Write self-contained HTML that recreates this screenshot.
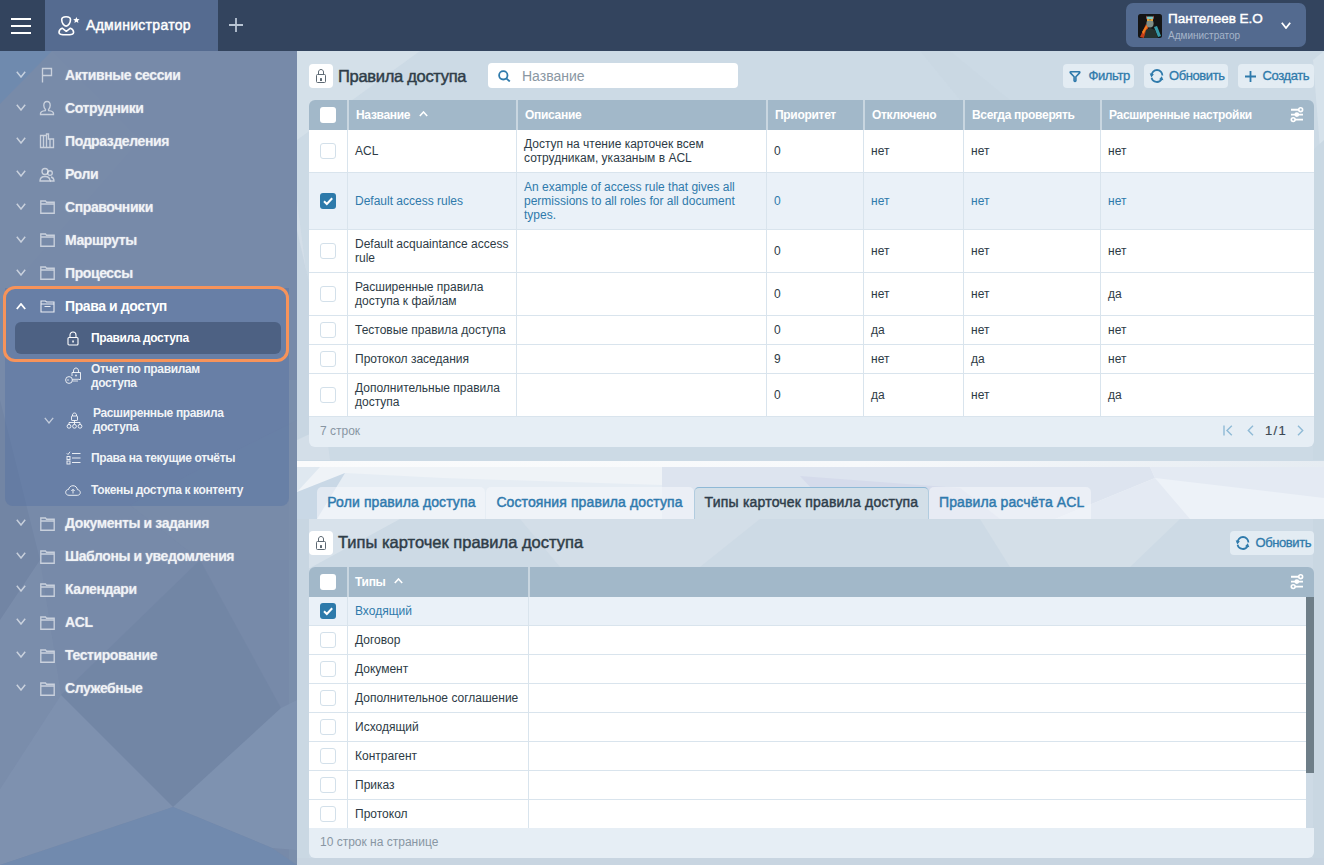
<!DOCTYPE html>
<html><head><meta charset="utf-8">
<style>
*{box-sizing:border-box;margin:0;padding:0}
html,body{width:1324px;height:865px;overflow:hidden;font-family:"Liberation Sans",sans-serif;}
body{position:relative;background:#d2dee8}
.abs{position:absolute}
#hdr{left:0;top:0;width:1324px;height:51px;background:#33445e}
#ham i{position:absolute;left:11px;width:20px;height:2px;background:#fff}
#admtab{left:45px;top:0;width:173px;height:51px;background:#556b90}
#side{left:0;top:51px;width:297px;height:814px;background:#778aa9;overflow:hidden}
#sidec{left:0;top:0;width:297px;height:865px}
#main{left:297px;top:51px;width:1027px;height:814px;background:#d2dee8;overflow:hidden}
.si{position:absolute;left:65px;color:rgba(255,255,255,0.92);font-size:14px;line-height:16px;font-weight:bold;white-space:nowrap;letter-spacing:-0.4px}
.ss{position:absolute;left:91px;color:rgba(255,255,255,0.92);font-size:12px;font-weight:bold;line-height:14px;white-space:nowrap;letter-spacing:-0.37px}
.grp{left:5px;top:288px;width:284px;height:218px;background:rgba(78,108,160,0.36);border-radius:0 0 8px 8px}
.sel{left:15px;top:322px;width:266px;height:32px;background:#4d6183;border-radius:6px}
.orange{left:3px;top:286px;width:286px;height:76px;border:3px solid #f7935a;border-radius:12px}
.cb{width:16px;height:16px;border:1px solid #d3e0ea;border-radius:3px;background:#fff}
.cbh{border:none}
.cbc{background:#2d7aaa;border:none}
.cbc svg{display:block}
.lockbtn{width:24px;height:24px;background:#fff;border-radius:4px}
.title{font-size:16.5px;line-height:20px;color:#2f3d48;white-space:nowrap;letter-spacing:-0.3px;-webkit-text-stroke:0.45px #2f3d48}
.search{left:488px;top:63px;width:250px;height:25px;background:#fff;border-radius:4px}
.tbtn{height:24px;background:#e3ecf3;border-radius:4px}
.btxt{font-size:13px;line-height:14px;color:#2f7aab;white-space:nowrap;letter-spacing:-0.4px;-webkit-text-stroke:0.3px #2f7aab}
.thead{background:#a2b8c9;border-radius:6px 6px 0 0}
.th{font-size:12px;line-height:14px;color:#fff;font-weight:bold;white-space:nowrap;letter-spacing:-0.3px}
.trow{background:#fff;border-bottom:1px solid #d9e4ed}
.tsel{background:#eaf1f8}
.vdiv{width:1px;background:#d9e4ed}
.td{display:flex;align-items:center;font-size:12px;line-height:14px;color:#2d3b46;white-space:nowrap}
.tdsel{color:#2f7aab}
.tfoot{background:#e6eef5;border-radius:0 0 6px 6px}
.tabsbg{background:#e3ebf3}
.tab{background:rgba(246,248,251,0.55);border-radius:5px 5px 0 0}
.tabact{background:#d3dfe8;border:1px solid #8fb9d6;border-bottom:none;border-color:#8fb9d6 rgba(143,185,214,0.5) transparent rgba(143,185,214,0.5)}
.tabt{font-size:14px;line-height:16px;color:#2f7aae;white-space:nowrap;letter-spacing:0.1px;-webkit-text-stroke:0.45px #2f7aae}
.tabtact{color:#2e3d4a;-webkit-text-stroke:0.45px #2e3d4a;letter-spacing:0.2px}
.avatar{background:radial-gradient(circle at 55% 35%, #6e8a8a 0 18%, transparent 30%), linear-gradient(135deg,#2a2a2a 0%,#c0431a 40%,#1e2a30 60%,#2fa3a8 100%)}

.blr{position:absolute;left:0;top:0;width:297px;height:865px;}
.bgsvg{position:absolute;left:0;top:0}
.blr .si{color:rgba(255,255,255,0.8);text-shadow:0 0 1.2px rgba(255,255,255,0.6)}

</style></head><body>
<svg width="0" height="0" style="position:absolute"><defs><filter id="sb" x="-5%" y="-5%" width="110%" height="110%"><feGaussianBlur stdDeviation="0.7"/></filter></defs></svg>
<div id="hdr" class="abs"></div>
<div id="ham" class="abs"><i style="top:18px"></i><i style="top:25px"></i><i style="top:32px"></i></div>
<div id="admtab" class="abs"></div>
<div id="side" class="abs"><svg class="bgsvg" width="297" height="814" viewBox="0 51 297 814">
<polygon points="0,51 52,51 0,104" fill="#6b8ab2" opacity="0.6"/>
<polygon points="52,51 0,104 0,300 140,140" fill="#7a8cab" opacity="0.4"/>
<polygon points="289,380 297,380 297,865 289,865" fill="#8194b0" opacity="0.35"/>
<polygon points="0,400 40,560 0,620" fill="#6d80a0" opacity="0.5"/>
<polygon points="0,620 40,560 61,695 0,789" fill="#7d90ae" opacity="0.6"/>
<polygon points="61,695 173,807 281,708 200,560" fill="#7084a4" opacity="0.7"/>
<polygon points="61,695 173,807 0,865 0,789" fill="#7f92b0" opacity="0.8"/>
<polygon points="281,708 173,807 272,848 297,850 297,700" fill="#8093b1" opacity="0.8"/>
<polygon points="0,865 173,807 272,848 297,865" fill="#708aae" opacity="0.9"/>
<polygon points="130,505 297,420 297,560 200,560" fill="#798baa" opacity="0.5"/>
</svg></div>
<div id="main" class="abs"><svg class="bgsvg" width="1027" height="814" viewBox="297 51 1027 814">
<rect x="297" y="51" width="1027" height="410" fill="#ccdae5"/>
<polygon points="297,51 420,51 297,140" fill="#d6e1ea" opacity="0.8"/>
<polygon points="297,200 330,460 297,460" fill="#d4dfe9" opacity="0.8"/>
<polygon points="297,230 340,420 297,440" fill="#c7d5e1" opacity="0.9"/>
<polygon points="1313,60 1324,51 1324,200" fill="#d8e3ec" opacity="0.8"/>
<polygon points="1313,150 1324,140 1324,460 1313,460" fill="#c9d7e2" opacity="0.9"/>
<polygon points="920,51 950,51 1010,100 960,100" fill="#c9d7e3" opacity="0.7"/>
<rect x="297" y="519" width="1027" height="346" fill="#cddae5"/>
<polygon points="297,519 400,519 297,575" fill="#d8e2eb"/>
<polygon points="520,519 760,519 700,567 560,567" fill="#d3dee8"/>
<polygon points="980,519 1180,519 1130,567 1010,567" fill="#d4dfe8"/>
<polygon points="297,519 297,700 309,700 309,519" fill="#c8d6e2"/>
<polygon points="297,700 309,700 309,865 297,865" fill="#cad8e3"/>
<polygon points="1313,519 1324,519 1324,865 1313,865" fill="#c9d7e2"/>
<polygon points="297,858 1324,858 1324,865 297,865" fill="#c8d5e1"/>
</svg></div>
<div id="sidec" class="abs"><div class="blr"><div class="si" style="top:67.15px">Активные сессии</div><svg class="abs" style="left:16px;top:71px" width="10" height="7" viewBox="0 0 10 7"><path d="M0.8 0.8 L5.0 6 L9.2 0.8" fill="none" stroke="rgba(255,255,255,0.6)" stroke-width="1.5"/></svg><svg class="abs" style="left:41px;top:67px;" width="12" height="16" viewBox="0 0 12 16"><path d="M1.5 15.5 V1.5 H10.5 V8.5 H1.5" fill="none" stroke="rgba(255,255,255,0.6)" stroke-width="1.35"/></svg></div><div class="blr"><div class="si" style="top:100.15px">Сотрудники</div><svg class="abs" style="left:16px;top:104px" width="10" height="7" viewBox="0 0 10 7"><path d="M0.8 0.8 L5.0 6 L9.2 0.8" fill="none" stroke="rgba(255,255,255,0.6)" stroke-width="1.5"/></svg><svg class="abs" style="left:39px;top:100px;" width="16" height="16" viewBox="0 0 16 16"><path d="M8 1.5 C5.5 1.5 4.8 3.5 4.8 5.5 C4.8 7.5 6 9 6.5 9.6 L6.3 10.6 C3.5 11 1.5 12 1.5 13.5 V14.5 H14.5 V13.5 C14.5 12 12.5 11 9.7 10.6 L9.5 9.6 C10 9 11.2 7.5 11.2 5.5 C11.2 3.5 10.5 1.5 8 1.5 Z" fill="none" stroke="rgba(255,255,255,0.6)" stroke-width="1.35"/></svg></div><div class="blr"><div class="si" style="top:133.15px">Подразделения</div><svg class="abs" style="left:16px;top:137px" width="10" height="7" viewBox="0 0 10 7"><path d="M0.8 0.8 L5.0 6 L9.2 0.8" fill="none" stroke="rgba(255,255,255,0.6)" stroke-width="1.5"/></svg><svg class="abs" style="left:39px;top:133px;" width="16" height="16" viewBox="0 0 16 16"><path d="M1.5 14.5 V2.5 H7.5 V1 H9.5 V6 H14.5 V14.5 Z M4.5 3 V14.5 M7.5 2.5 V14.5 M11 6 V14.5" fill="none" stroke="rgba(255,255,255,0.6)" stroke-width="1.35"/></svg></div><div class="blr"><div class="si" style="top:166.15px">Роли</div><svg class="abs" style="left:16px;top:170px" width="10" height="7" viewBox="0 0 10 7"><path d="M0.8 0.8 L5.0 6 L9.2 0.8" fill="none" stroke="rgba(255,255,255,0.6)" stroke-width="1.5"/></svg><svg class="abs" style="left:39px;top:167px;" width="16" height="15" viewBox="0 0 16 15"><circle cx="6" cy="4.5" r="3" fill="none" stroke="rgba(255,255,255,0.6)" stroke-width="1.35"/><path d="M1 14 C1 11 3 9.5 6 9.5 C9 9.5 11 11 11 14 Z" fill="none" stroke="rgba(255,255,255,0.6)" stroke-width="1.35"/><circle cx="11" cy="6" r="2.3" fill="none" stroke="rgba(255,255,255,0.6)" stroke-width="1.35"/><path d="M12 10 C14 10.5 15 12 15 14 H11" fill="none" stroke="rgba(255,255,255,0.6)" stroke-width="1.35"/></svg></div><div class="blr"><div class="si" style="top:199.15px">Справочники</div><svg class="abs" style="left:16px;top:203px" width="10" height="7" viewBox="0 0 10 7"><path d="M0.8 0.8 L5.0 6 L9.2 0.8" fill="none" stroke="rgba(255,255,255,0.6)" stroke-width="1.5"/></svg><svg class="abs" style="left:40px;top:200px;" width="15" height="14" viewBox="0 0 15 14"><path d="M0.8 13.2 V1 H5.5 L6.5 2.2 H14.2 V13.2 Z M0.8 4 H14.2" fill="none" stroke="rgba(255,255,255,0.6)" stroke-width="1.35"/></svg></div><div class="blr"><div class="si" style="top:232.15px">Маршруты</div><svg class="abs" style="left:16px;top:236px" width="10" height="7" viewBox="0 0 10 7"><path d="M0.8 0.8 L5.0 6 L9.2 0.8" fill="none" stroke="rgba(255,255,255,0.6)" stroke-width="1.5"/></svg><svg class="abs" style="left:40px;top:233px;" width="15" height="14" viewBox="0 0 15 14"><path d="M0.8 13.2 V1 H5.5 L6.5 2.2 H14.2 V13.2 Z M0.8 4 H14.2" fill="none" stroke="rgba(255,255,255,0.6)" stroke-width="1.35"/></svg></div><div class="blr"><div class="si" style="top:265.15px">Процессы</div><svg class="abs" style="left:16px;top:269px" width="10" height="7" viewBox="0 0 10 7"><path d="M0.8 0.8 L5.0 6 L9.2 0.8" fill="none" stroke="rgba(255,255,255,0.6)" stroke-width="1.5"/></svg><svg class="abs" style="left:40px;top:266px;" width="15" height="14" viewBox="0 0 15 14"><path d="M0.8 13.2 V1 H5.5 L6.5 2.2 H14.2 V13.2 Z M0.8 4 H14.2" fill="none" stroke="rgba(255,255,255,0.6)" stroke-width="1.35"/></svg></div><div class="abs grp"></div><div class="abs sel"></div><div class="abs orange"></div><div class="si" style="top:298.15px;color:#fff">Права и доступ</div><svg class="abs" style="left:16px;top:303px" width="10" height="7" viewBox="0 0 10 7"><path d="M0.8 6 L5.0 1 L9.2 6" fill="none" stroke="#fff" stroke-width="1.8"/></svg><svg class="abs" style="left:40px;top:300px;" width="15" height="13" viewBox="0 0 15 13"><path d="M1 12 V1 H5.5 L6.5 2 H14 V12 Z M1 4 H14 M4.5 6.5 H10.5" fill="none" stroke="rgba(255,255,255,0.85)" stroke-width="1.1"/></svg><div class="ss" style="top:330.84px;color:#fff">Правила доступа</div><svg class="abs" style="left:67px;top:331px;" width="12" height="15" viewBox="0 0 12 15"><path d="M3 6.5 V4 C3 2.2 4.3 1 6 1 C7.7 1 9 2.2 9 4 V6.5" fill="none" stroke="#fff" stroke-width="1.1"/><rect x="1" y="6.5" width="10" height="7.5" rx="1" fill="none" stroke="#fff" stroke-width="1.1"/><rect x="5.3" y="9.5" width="1.5" height="2" fill="#fff"/></svg><div class="ss" style="top:361.84px">Отчет по правилам<br>доступа</div><svg class="abs" style="left:65px;top:367px;" width="17" height="17" viewBox="0 0 17 17"><path d="M8.5 5.5 V4 C8.5 2.3 9.5 1 11 1 C12.5 1 13.5 2.3 13.5 4 V5.5" fill="none" stroke="rgba(255,255,255,0.85)" stroke-width="1"/><path d="M7 9 V5.5 H15.5 V12.5 H14" fill="none" stroke="rgba(255,255,255,0.85)" stroke-width="1"/><circle cx="11" cy="8.5" r="0.9" fill="rgba(255,255,255,0.85)"/><circle cx="4" cy="13" r="3.4" fill="none" stroke="rgba(255,255,255,0.85)" stroke-width="1"/><path d="M7.4 12.3 H14 M7.4 14 H13" fill="none" stroke="rgba(255,255,255,0.85)" stroke-width="0.9"/><circle cx="3" cy="13" r="0.8" fill="rgba(255,255,255,0.85)"/></svg><div class="ss" style="left:93px;top:405.84px">Расширенные правила<br>доступа</div><svg class="abs" style="left:44px;top:417px" width="10" height="7" viewBox="0 0 10 7"><path d="M0.8 0.8 L5.0 6 L9.2 0.8" fill="none" stroke="rgba(255,255,255,0.6)" stroke-width="1.3"/></svg><svg class="abs" style="left:66px;top:412px;" width="17" height="17" viewBox="0 0 17 17"><path d="M6.5 4 V3 C6.5 1.8 7.4 1 8.5 1 C9.6 1 10.5 1.8 10.5 3 V4" fill="none" stroke="rgba(255,255,255,0.85)" stroke-width="1"/><rect x="5.5" y="4" width="6" height="4.5" rx="0.6" fill="none" stroke="rgba(255,255,255,0.85)" stroke-width="1"/><path d="M8.5 8.5 V10.5 M3 12.5 V10.5 H14 V12.5 M8.5 10.5 V12.5" fill="none" stroke="rgba(255,255,255,0.85)" stroke-width="1"/><circle cx="3" cy="14.3" r="1.9" fill="none" stroke="rgba(255,255,255,0.85)" stroke-width="1"/><circle cx="8.5" cy="14.3" r="1.9" fill="none" stroke="rgba(255,255,255,0.85)" stroke-width="1"/><circle cx="14" cy="14.3" r="1.9" fill="none" stroke="rgba(255,255,255,0.85)" stroke-width="1"/></svg><div class="ss" style="top:450.84px">Права на текущие отчёты</div><svg class="abs" style="left:66px;top:451px;" width="15" height="14" viewBox="0 0 15 14"><path d="M0.8 2.3 L2 3.5 L4 0.8 M6 2.5 H14.5 M6 7 H14.5 M6 11.5 H14.5" fill="none" stroke="rgba(255,255,255,0.85)" stroke-width="1"/><rect x="1" y="5.5" width="3" height="3" fill="none" stroke="rgba(255,255,255,0.85)" stroke-width="1"/><rect x="1" y="10" width="3" height="3" fill="none" stroke="rgba(255,255,255,0.85)" stroke-width="1"/></svg><div class="ss" style="top:483.34px">Токены доступа к контенту</div><svg class="abs" style="left:65px;top:484.5px;" width="16" height="11" viewBox="0 0 16 11"><path d="M4 10.3 C2 10.3 0.7 9 0.7 7.3 C0.7 5.6 2 4.5 3.5 4.5 C4 2.2 5.8 0.7 8 0.7 C10.5 0.7 12.2 2.5 12.4 4.6 C14 4.8 15.3 6 15.3 7.6 C15.3 9.2 14 10.3 12.3 10.3 Z" fill="none" stroke="rgba(255,255,255,0.85)" stroke-width="1"/><path d="M8 8.5 V4.5 M6.3 6 L8 4.3 L9.7 6" fill="none" stroke="rgba(255,255,255,0.85)" stroke-width="1"/></svg><div class="blr"><div class="si" style="top:515.15px">Документы и задания</div><svg class="abs" style="left:16px;top:519px" width="10" height="7" viewBox="0 0 10 7"><path d="M0.8 0.8 L5.0 6 L9.2 0.8" fill="none" stroke="rgba(255,255,255,0.6)" stroke-width="1.5"/></svg><svg class="abs" style="left:40px;top:516.5px;" width="15" height="14" viewBox="0 0 15 14"><path d="M0.8 13.2 V1 H5.5 L6.5 2.2 H14.2 V13.2 Z M0.8 4 H14.2" fill="none" stroke="rgba(255,255,255,0.6)" stroke-width="1.35"/></svg></div><div class="blr"><div class="si" style="top:548.15px">Шаблоны и уведомления</div><svg class="abs" style="left:16px;top:552px" width="10" height="7" viewBox="0 0 10 7"><path d="M0.8 0.8 L5.0 6 L9.2 0.8" fill="none" stroke="rgba(255,255,255,0.6)" stroke-width="1.5"/></svg><svg class="abs" style="left:40px;top:549.5px;" width="15" height="14" viewBox="0 0 15 14"><path d="M0.8 13.2 V1 H5.5 L6.5 2.2 H14.2 V13.2 Z M0.8 4 H14.2" fill="none" stroke="rgba(255,255,255,0.6)" stroke-width="1.35"/></svg></div><div class="blr"><div class="si" style="top:581.15px">Календари</div><svg class="abs" style="left:16px;top:585px" width="10" height="7" viewBox="0 0 10 7"><path d="M0.8 0.8 L5.0 6 L9.2 0.8" fill="none" stroke="rgba(255,255,255,0.6)" stroke-width="1.5"/></svg><svg class="abs" style="left:40px;top:582.5px;" width="15" height="14" viewBox="0 0 15 14"><path d="M0.8 13.2 V1 H5.5 L6.5 2.2 H14.2 V13.2 Z M0.8 4 H14.2" fill="none" stroke="rgba(255,255,255,0.6)" stroke-width="1.35"/></svg></div><div class="blr"><div class="si" style="top:614.15px">ACL</div><svg class="abs" style="left:16px;top:618px" width="10" height="7" viewBox="0 0 10 7"><path d="M0.8 0.8 L5.0 6 L9.2 0.8" fill="none" stroke="rgba(255,255,255,0.6)" stroke-width="1.5"/></svg><svg class="abs" style="left:40px;top:615.5px;" width="15" height="14" viewBox="0 0 15 14"><path d="M0.8 13.2 V1 H5.5 L6.5 2.2 H14.2 V13.2 Z M0.8 4 H14.2" fill="none" stroke="rgba(255,255,255,0.6)" stroke-width="1.35"/></svg></div><div class="blr"><div class="si" style="top:647.15px">Тестирование</div><svg class="abs" style="left:16px;top:651px" width="10" height="7" viewBox="0 0 10 7"><path d="M0.8 0.8 L5.0 6 L9.2 0.8" fill="none" stroke="rgba(255,255,255,0.6)" stroke-width="1.5"/></svg><svg class="abs" style="left:40px;top:648.5px;" width="15" height="14" viewBox="0 0 15 14"><path d="M0.8 13.2 V1 H5.5 L6.5 2.2 H14.2 V13.2 Z M0.8 4 H14.2" fill="none" stroke="rgba(255,255,255,0.6)" stroke-width="1.35"/></svg></div><div class="blr"><div class="si" style="top:680.15px">Служебные</div><svg class="abs" style="left:16px;top:684px" width="10" height="7" viewBox="0 0 10 7"><path d="M0.8 0.8 L5.0 6 L9.2 0.8" fill="none" stroke="rgba(255,255,255,0.6)" stroke-width="1.5"/></svg><svg class="abs" style="left:40px;top:681.5px;" width="15" height="14" viewBox="0 0 15 14"><path d="M0.8 13.2 V1 H5.5 L6.5 2.2 H14.2 V13.2 Z M0.8 4 H14.2" fill="none" stroke="rgba(255,255,255,0.6)" stroke-width="1.35"/></svg></div></div>
<svg class="abs" style="left:52px;top:10px;" width="32" height="32" viewBox="0 0 32 32"><path d="M14.1 6.7 C17 6.7 18.5 7.3 18.5 9.6 C18.5 12.8 16.4 16.1 14.1 16.1 C11.8 16.1 9.7 12.8 9.7 9.6 C9.7 7.3 11.2 6.7 14.1 6.7 Z" fill="none" stroke="#fff" stroke-width="1.6"/><path d="M10.2 18.2 L14.3 21.3 L18.4 18.2 C20.6 19 21.6 20.6 21.6 22.4 C21.6 24.2 19.4 24.8 14.3 24.8 C9.2 24.8 7 24.2 7 22.4 C7 20.6 8 19 10.2 18.2 Z" fill="none" stroke="#fff" stroke-width="1.6" stroke-linejoin="round"/><path d="M24.4 6.9 L25.3 9 L27.6 9.2 L25.9 10.7 L26.4 13 L24.4 11.8 L22.4 13 L22.9 10.7 L21.2 9.2 L23.5 9 Z" fill="#fff"/></svg><div class="abs" style="left:86px;top:17.15px;font-size:14px;line-height:16px;color:#fff;white-space:nowrap;letter-spacing:0.3px;-webkit-text-stroke:0.45px #fff">Администратор</div><svg class="abs" style="left:228px;top:17px;" width="16" height="16" viewBox="0 0 16 16"><path d="M8 1 V15 M1 8 H15" stroke="#b9c5d4" stroke-width="1.8"/></svg><div class="abs" style="left:1126px;top:3px;width:180px;height:44px;background:#536a8f;border-radius:7px"></div><svg class="abs" style="left:1138px;top:14px;" width="24" height="24" viewBox="0 0 24 24"><defs><clipPath id="avc"><rect x="0" y="0" width="24" height="24" rx="2.5"/></clipPath></defs><g clip-path="url(#avc)"><rect width="24" height="24" fill="#141414"/><path d="M2 23 L8 10 L11 12 L6 24 Z" fill="#d8441a" opacity="0.9"/><path d="M4 18 L8.5 11 L9.5 13 L5.5 20 Z" fill="#f2801e"/><path d="M16 13 L19 12 L23 22 L20 23 Z" fill="#3aa9b8" opacity="0.9"/><path d="M6 24 L8 16 L12 14 L17 16 L20 24 Z" fill="#25332e"/><ellipse cx="12" cy="9.5" rx="3.6" ry="4" fill="#7f8e86"/><rect x="8.5" y="2.5" width="7" height="2.5" rx="1" fill="#7fc8c4"/><rect x="9" y="5" width="2.6" height="2" fill="#e9a33a"/><rect x="12.4" y="5" width="2.6" height="2" fill="#e9a33a"/><path d="M8 3 L9 1.5 V6 Z M16 3 L15 1.5 V6 Z" fill="#c05a55"/></g></svg><div class="abs" style="left:1168px;top:11.32px;font-size:13.5px;line-height:16px;color:#fff;white-space:nowrap;letter-spacing:0px;-webkit-text-stroke:0.45px #fff">Пантелеев Е.О</div><div class="abs" style="left:1168px;top:29.83px;font-size:10px;line-height:12px;color:#a6b5c9;white-space:nowrap">Администратор</div><svg class="abs" style="left:1281px;top:21.5px" width="10" height="7" viewBox="0 0 10 7"><path d="M0.8 0.8 L5.0 6 L9.2 0.8" fill="none" stroke="#fff" stroke-width="1.8"/></svg>
<div class="abs lockbtn" style="left:309px;top:64px"></div><svg class="abs" style="left:309px;top:64px;" width="24" height="24" viewBox="0 0 24 24"><path d="M9.5 10.5 V8 C9.5 6.5 10.6 5.5 12 5.5 C13.4 5.5 14.5 6.5 14.5 8 V10.5" fill="none" stroke="#5d6973" stroke-width="1"/><rect x="7.5" y="10.5" width="9" height="8" rx="1" fill="none" stroke="#5d6973" stroke-width="1"/><rect x="11" y="14" width="2" height="3" rx="0.5" fill="#5d6973"/></svg><div class="abs title" style="left:338px;top:65.86px">Правила доступа</div><div class="abs search"></div><svg class="abs" style="left:498px;top:70px;" width="13" height="12" viewBox="0 0 13 12"><circle cx="5.3" cy="5.3" r="4.2" fill="none" stroke="#2f7aab" stroke-width="1.8"/><path d="M8.3 8.3 L11.8 11.5" stroke="#2f7aab" stroke-width="1.8"/></svg><div class="abs" style="left:522px;top:67.55px;font-size:14px;line-height:16px;color:#8a97a3;white-space:nowrap">Название</div><div class="abs tbtn" style="left:1063px;top:64px;width:71px"></div><svg class="abs" style="left:1069px;top:69.5px;" width="12" height="13" viewBox="0 0 12 13"><path d="M1.8 1.8 H10.2 Q11.2 1.9 10.6 2.9 L6.9 6.8 V10.8 Q6 12.2 5.1 10.8 V6.8 L1.4 2.9 Q0.8 1.9 1.8 1.8 Z" fill="none" stroke="#2f7aab" stroke-width="1.6" stroke-linejoin="round"/></svg><div class="abs btxt" style="left:1088.5px;top:68.5px">Фильтр</div><div class="abs tbtn" style="left:1144px;top:64px;width:84px"></div><svg class="abs" style="left:1149px;top:68.5px;" width="16" height="16" viewBox="0 0 16 16"><path d="M2.6 6.6 A5.4 5.6 0 0 1 13.4 6.6" fill="none" stroke="#2f7aab" stroke-width="1.8"/><path d="M2.6 8.8 A5.4 5.6 0 0 0 12.6 10" fill="none" stroke="#2f7aab" stroke-width="1.8"/><path d="M0.7 4.2 L4.9 5.3 L2.3 8.4 Z" fill="#2f7aab"/><path d="M14.4 11.3 L10.1 10.2 L12.8 7.2 Z" fill="#2f7aab"/></svg><div class="abs btxt" style="left:1169px;top:68.5px">Обновить</div><div class="abs tbtn" style="left:1238px;top:64px;width:76px"></div><svg class="abs" style="left:1245px;top:70.5px;" width="11" height="11" viewBox="0 0 11 11"><path d="M5.5 0 V11 M0 5.5 H11" stroke="#2f7aab" stroke-width="1.8"/></svg><div class="abs btxt" style="left:1262.5px;top:68.5px">Создать</div><div class="abs thead" style="left:309px;top:100px;width:1005px;height:30px"></div><div class="abs" style="left:347px;top:100px;width:2px;height:30px;background:#c9d6e0"></div><div class="abs" style="left:516px;top:100px;width:2px;height:30px;background:#c9d6e0"></div><div class="abs" style="left:766px;top:100px;width:2px;height:30px;background:#c9d6e0"></div><div class="abs" style="left:863px;top:100px;width:2px;height:30px;background:#c9d6e0"></div><div class="abs" style="left:963px;top:100px;width:2px;height:30px;background:#c9d6e0"></div><div class="abs" style="left:1100px;top:100px;width:2px;height:30px;background:#c9d6e0"></div><div class="abs cb cbh" style="left:320px;top:107px"></div><div class="abs th" style="left:356px;top:107.84px">Название</div><div class="abs th" style="left:525px;top:107.84px">Описание</div><div class="abs th" style="left:775px;top:107.84px">Приоритет</div><div class="abs th" style="left:872px;top:107.84px">Отключено</div><div class="abs th" style="left:972px;top:107.84px">Всегда проверять</div><div class="abs th" style="left:1109px;top:107.84px">Расширенные настройки</div><svg class="abs" style="left:419px;top:111px" width="9" height="6" viewBox="0 0 9 6"><path d="M0.8 5 L4.5 1 L8.2 5" fill="none" stroke="#fff" stroke-width="1.6"/></svg><svg class="abs" style="left:1290px;top:107px;" width="15" height="16" viewBox="0 0 15 16"><path d="M1 2.7 H9 M1 7.6 H13 M5 12.6 H13" stroke="#fff" stroke-width="1.9"/><circle cx="10.7" cy="2.7" r="1.9" fill="#a2b8c9" stroke="#fff" stroke-width="1.6"/><circle cx="6.8" cy="7.6" r="2.4" fill="#fff"/><circle cx="3.2" cy="12.6" r="1.9" fill="#a2b8c9" stroke="#fff" stroke-width="1.6"/></svg><div class="abs trow" style="left:309px;top:130px;width:1005px;height:43px"></div><div class="abs vdiv" style="left:347px;top:130px;height:43px"></div><div class="abs vdiv" style="left:516px;top:130px;height:43px"></div><div class="abs vdiv" style="left:766px;top:130px;height:43px"></div><div class="abs vdiv" style="left:863px;top:130px;height:43px"></div><div class="abs vdiv" style="left:963px;top:130px;height:43px"></div><div class="abs vdiv" style="left:1100px;top:130px;height:43px"></div><div class="abs cb" style="left:320px;top:143px"></div><div class="abs td" style="left:355px;top:130px;height:42px">ACL</div><div class="abs td" style="left:524px;top:130px;height:42px">Доступ на чтение карточек всем<br>сотрудникам, указаным в ACL</div><div class="abs td" style="left:774px;top:130px;height:42px">0</div><div class="abs td" style="left:871px;top:130px;height:42px">нет</div><div class="abs td" style="left:971px;top:130px;height:42px">нет</div><div class="abs td" style="left:1108px;top:130px;height:42px">нет</div><div class="abs trow tsel" style="left:309px;top:173px;width:1005px;height:57px"></div><div class="abs vdiv" style="left:347px;top:173px;height:57px"></div><div class="abs vdiv" style="left:516px;top:173px;height:57px"></div><div class="abs vdiv" style="left:766px;top:173px;height:57px"></div><div class="abs vdiv" style="left:863px;top:173px;height:57px"></div><div class="abs vdiv" style="left:963px;top:173px;height:57px"></div><div class="abs vdiv" style="left:1100px;top:173px;height:57px"></div><div class="abs cb cbc" style="left:320px;top:193px"><svg width="16" height="16" viewBox="0 0 16 16"><path d="M4 8.2 L6.8 11 L12.2 5.2" fill="none" stroke="#fff" stroke-width="2"/></svg></div><div class="abs td tdsel" style="left:355px;top:173px;height:56px">Default access rules</div><div class="abs td tdsel" style="left:524px;top:173px;height:56px">An example of access rule that gives all<br>permissions to all roles for all document<br>types.</div><div class="abs td tdsel" style="left:774px;top:173px;height:56px">0</div><div class="abs td tdsel" style="left:871px;top:173px;height:56px">нет</div><div class="abs td tdsel" style="left:971px;top:173px;height:56px">нет</div><div class="abs td tdsel" style="left:1108px;top:173px;height:56px">нет</div><div class="abs trow" style="left:309px;top:230px;width:1005px;height:43px"></div><div class="abs vdiv" style="left:347px;top:230px;height:43px"></div><div class="abs vdiv" style="left:516px;top:230px;height:43px"></div><div class="abs vdiv" style="left:766px;top:230px;height:43px"></div><div class="abs vdiv" style="left:863px;top:230px;height:43px"></div><div class="abs vdiv" style="left:963px;top:230px;height:43px"></div><div class="abs vdiv" style="left:1100px;top:230px;height:43px"></div><div class="abs cb" style="left:320px;top:243px"></div><div class="abs td" style="left:355px;top:230px;height:42px">Default acquaintance access<br>rule</div><div class="abs td" style="left:774px;top:230px;height:42px">0</div><div class="abs td" style="left:871px;top:230px;height:42px">нет</div><div class="abs td" style="left:971px;top:230px;height:42px">нет</div><div class="abs td" style="left:1108px;top:230px;height:42px">нет</div><div class="abs trow" style="left:309px;top:273px;width:1005px;height:43px"></div><div class="abs vdiv" style="left:347px;top:273px;height:43px"></div><div class="abs vdiv" style="left:516px;top:273px;height:43px"></div><div class="abs vdiv" style="left:766px;top:273px;height:43px"></div><div class="abs vdiv" style="left:863px;top:273px;height:43px"></div><div class="abs vdiv" style="left:963px;top:273px;height:43px"></div><div class="abs vdiv" style="left:1100px;top:273px;height:43px"></div><div class="abs cb" style="left:320px;top:286px"></div><div class="abs td" style="left:355px;top:273px;height:42px">Расширенные правила<br>доступа к файлам</div><div class="abs td" style="left:774px;top:273px;height:42px">0</div><div class="abs td" style="left:871px;top:273px;height:42px">нет</div><div class="abs td" style="left:971px;top:273px;height:42px">нет</div><div class="abs td" style="left:1108px;top:273px;height:42px">да</div><div class="abs trow" style="left:309px;top:316px;width:1005px;height:29px"></div><div class="abs vdiv" style="left:347px;top:316px;height:29px"></div><div class="abs vdiv" style="left:516px;top:316px;height:29px"></div><div class="abs vdiv" style="left:766px;top:316px;height:29px"></div><div class="abs vdiv" style="left:863px;top:316px;height:29px"></div><div class="abs vdiv" style="left:963px;top:316px;height:29px"></div><div class="abs vdiv" style="left:1100px;top:316px;height:29px"></div><div class="abs cb" style="left:320px;top:322px"></div><div class="abs td" style="left:355px;top:316px;height:28px">Тестовые правила доступа</div><div class="abs td" style="left:774px;top:316px;height:28px">0</div><div class="abs td" style="left:871px;top:316px;height:28px">да</div><div class="abs td" style="left:971px;top:316px;height:28px">нет</div><div class="abs td" style="left:1108px;top:316px;height:28px">нет</div><div class="abs trow" style="left:309px;top:345px;width:1005px;height:29px"></div><div class="abs vdiv" style="left:347px;top:345px;height:29px"></div><div class="abs vdiv" style="left:516px;top:345px;height:29px"></div><div class="abs vdiv" style="left:766px;top:345px;height:29px"></div><div class="abs vdiv" style="left:863px;top:345px;height:29px"></div><div class="abs vdiv" style="left:963px;top:345px;height:29px"></div><div class="abs vdiv" style="left:1100px;top:345px;height:29px"></div><div class="abs cb" style="left:320px;top:351px"></div><div class="abs td" style="left:355px;top:345px;height:28px">Протокол заседания</div><div class="abs td" style="left:774px;top:345px;height:28px">9</div><div class="abs td" style="left:871px;top:345px;height:28px">нет</div><div class="abs td" style="left:971px;top:345px;height:28px">да</div><div class="abs td" style="left:1108px;top:345px;height:28px">нет</div><div class="abs trow" style="left:309px;top:374px;width:1005px;height:43px"></div><div class="abs vdiv" style="left:347px;top:374px;height:43px"></div><div class="abs vdiv" style="left:516px;top:374px;height:43px"></div><div class="abs vdiv" style="left:766px;top:374px;height:43px"></div><div class="abs vdiv" style="left:863px;top:374px;height:43px"></div><div class="abs vdiv" style="left:963px;top:374px;height:43px"></div><div class="abs vdiv" style="left:1100px;top:374px;height:43px"></div><div class="abs cb" style="left:320px;top:387px"></div><div class="abs td" style="left:355px;top:374px;height:42px">Дополнительные правила<br>доступа</div><div class="abs td" style="left:774px;top:374px;height:42px">0</div><div class="abs td" style="left:871px;top:374px;height:42px">да</div><div class="abs td" style="left:971px;top:374px;height:42px">нет</div><div class="abs td" style="left:1108px;top:374px;height:42px">да</div><div class="abs tfoot" style="left:309px;top:417px;width:1005px;height:30px"></div><div class="abs" style="left:320px;top:423.84px;font-size:12px;line-height:14px;color:#8896a3;white-space:nowrap">7 строк</div><svg class="abs" style="left:1223px;top:425px;" width="10" height="11" viewBox="0 0 10 11"><path d="M1 0.5 V10.5" stroke="#8fbad6" stroke-width="1.4"/><path d="M8.8 0.8 L4 5.5 L8.8 10.2" fill="none" stroke="#8fbad6" stroke-width="1.4"/></svg><svg class="abs" style="left:1246.5px;top:425px;" width="7" height="11" viewBox="0 0 7 11"><path d="M6 0.8 L1.3 5.5 L6 10.2" fill="none" stroke="#8fbad6" stroke-width="1.4"/></svg><div class="abs" style="left:1265px;top:423.7px;font-size:13px;line-height:14px;color:#3c4954;white-space:nowrap;letter-spacing:1.3px;-webkit-text-stroke:0.2px #3c4954">1/1</div><svg class="abs" style="left:1296.5px;top:425px;" width="7" height="11" viewBox="0 0 7 11"><path d="M1 0.8 L5.7 5.5 L1 10.2" fill="none" stroke="#8fbad6" stroke-width="1.4"/></svg><div class="abs" style="left:297px;top:461px;width:1027px;height:6px;background:rgba(255,255,255,0.75)"></div><svg class="abs" style="left:297px;top:461px" width="1027" height="58" viewBox="297 461 1027 58">
<defs><linearGradient id="band" x1="0" x2="1" y1="0" y2="0"><stop offset="0" stop-color="#fafbfc"/><stop offset="0.55" stop-color="#f7f9fb"/><stop offset="1" stop-color="#e6ecf2"/></linearGradient></defs>
<rect x="297" y="461" width="1027" height="58" fill="#eff3f7"/>
<polygon points="317,487 345,473 443,478 662,485 700,487 700,519 317,519" fill="#e6edf4"/>
<polygon points="297,467 320,467 297,492" fill="#dfe8f0"/>
<polygon points="297,492 345,473 317,519 297,519" fill="#c9d8e6"/>
<polygon points="662,467 1150,467 1155,478 1055,519 662,519" fill="#dde4ef"/>
<polygon points="800,476 960,488 1000,519 840,519" fill="#d5dbeb"/>
<polygon points="1150,467 1324,467 1324,519 1055,519 1155,478" fill="#e4eaf3"/>
<polygon points="1155,478 1324,498 1324,519 1190,519" fill="#edf2f8"/>
<rect x="297" y="461" width="1027" height="6" fill="url(#band)"/>
</svg><div class="abs tab" style="left:317px;top:487px;width:168px;height:32px"></div><div class="abs tabt" style="left:327.3px;top:494.15px">Роли правила доступа</div><div class="abs tab" style="left:486px;top:487px;width:208px;height:32px"></div><div class="abs tabt" style="left:496.4px;top:494.15px">Состояния правила доступа</div><div class="abs tab tabact" style="left:694px;top:487px;width:235px;height:32px"></div><div class="abs tabt tabtact" style="left:704.6px;top:494.15px">Типы карточек правила доступа</div><div class="abs tab" style="left:929px;top:487px;width:162px;height:32px"></div><div class="abs tabt" style="left:939px;top:494.15px">Правила расчёта ACL</div><div class="abs lockbtn" style="left:309px;top:531px"></div><svg class="abs" style="left:309px;top:531px;" width="24" height="24" viewBox="0 0 24 24"><path d="M9.5 10.5 V8 C9.5 6.5 10.6 5.5 12 5.5 C13.4 5.5 14.5 6.5 14.5 8 V10.5" fill="none" stroke="#5d6973" stroke-width="1"/><rect x="7.5" y="10.5" width="9" height="8" rx="1" fill="none" stroke="#5d6973" stroke-width="1"/><rect x="11" y="14" width="2" height="3" rx="0.5" fill="#5d6973"/></svg><div class="abs title" style="left:338px;top:532.46px;letter-spacing:0px">Типы карточек правила доступа</div><div class="abs tbtn" style="left:1230px;top:531px;width:84px"></div><svg class="abs" style="left:1235px;top:535.5px;" width="16" height="16" viewBox="0 0 16 16"><path d="M2.6 6.6 A5.4 5.6 0 0 1 13.4 6.6" fill="none" stroke="#2f7aab" stroke-width="1.8"/><path d="M2.6 8.8 A5.4 5.6 0 0 0 12.6 10" fill="none" stroke="#2f7aab" stroke-width="1.8"/><path d="M0.7 4.2 L4.9 5.3 L2.3 8.4 Z" fill="#2f7aab"/><path d="M14.4 11.3 L10.1 10.2 L12.8 7.2 Z" fill="#2f7aab"/></svg><div class="abs btxt" style="left:1255.5px;top:535.5px">Обновить</div><div class="abs thead" style="left:309px;top:567px;width:1005px;height:30px"></div><div class="abs" style="left:347px;top:567px;width:2px;height:30px;background:#c9d6e0"></div><div class="abs" style="left:528px;top:567px;width:2px;height:30px;background:#c9d6e0"></div><div class="abs cb cbh" style="left:320px;top:574px"></div><div class="abs th" style="left:355px;top:574.84px">Типы</div><svg class="abs" style="left:394px;top:578px" width="9" height="6" viewBox="0 0 9 6"><path d="M0.8 5 L4.5 1 L8.2 5" fill="none" stroke="#fff" stroke-width="1.6"/></svg><svg class="abs" style="left:1290px;top:574px;" width="15" height="16" viewBox="0 0 15 16"><path d="M1 2.7 H9 M1 7.6 H13 M5 12.6 H13" stroke="#fff" stroke-width="1.9"/><circle cx="10.7" cy="2.7" r="1.9" fill="#a2b8c9" stroke="#fff" stroke-width="1.6"/><circle cx="6.8" cy="7.6" r="2.4" fill="#fff"/><circle cx="3.2" cy="12.6" r="1.9" fill="#a2b8c9" stroke="#fff" stroke-width="1.6"/></svg><div class="abs trow tsel" style="left:309px;top:597px;width:997px;height:29px"></div><div class="abs vdiv" style="left:347px;top:597px;height:29px"></div><div class="abs vdiv" style="left:528px;top:597px;height:29px"></div><div class="abs cb cbc" style="left:320px;top:603px"><svg width="16" height="16" viewBox="0 0 16 16"><path d="M4 8.2 L6.8 11 L12.2 5.2" fill="none" stroke="#fff" stroke-width="2"/></svg></div><div class="abs td tdsel" style="left:355px;top:597px;height:28px">Входящий</div><div class="abs trow" style="left:309px;top:626px;width:997px;height:29px"></div><div class="abs vdiv" style="left:347px;top:626px;height:29px"></div><div class="abs vdiv" style="left:528px;top:626px;height:29px"></div><div class="abs cb" style="left:320px;top:632px"></div><div class="abs td" style="left:355px;top:626px;height:28px">Договор</div><div class="abs trow" style="left:309px;top:655px;width:997px;height:29px"></div><div class="abs vdiv" style="left:347px;top:655px;height:29px"></div><div class="abs vdiv" style="left:528px;top:655px;height:29px"></div><div class="abs cb" style="left:320px;top:661px"></div><div class="abs td" style="left:355px;top:655px;height:28px">Документ</div><div class="abs trow" style="left:309px;top:684px;width:997px;height:29px"></div><div class="abs vdiv" style="left:347px;top:684px;height:29px"></div><div class="abs vdiv" style="left:528px;top:684px;height:29px"></div><div class="abs cb" style="left:320px;top:690px"></div><div class="abs td" style="left:355px;top:684px;height:28px">Дополнительное соглашение</div><div class="abs trow" style="left:309px;top:713px;width:997px;height:29px"></div><div class="abs vdiv" style="left:347px;top:713px;height:29px"></div><div class="abs vdiv" style="left:528px;top:713px;height:29px"></div><div class="abs cb" style="left:320px;top:719px"></div><div class="abs td" style="left:355px;top:713px;height:28px">Исходящий</div><div class="abs trow" style="left:309px;top:742px;width:997px;height:29px"></div><div class="abs vdiv" style="left:347px;top:742px;height:29px"></div><div class="abs vdiv" style="left:528px;top:742px;height:29px"></div><div class="abs cb" style="left:320px;top:748px"></div><div class="abs td" style="left:355px;top:742px;height:28px">Контрагент</div><div class="abs trow" style="left:309px;top:771px;width:997px;height:29px"></div><div class="abs vdiv" style="left:347px;top:771px;height:29px"></div><div class="abs vdiv" style="left:528px;top:771px;height:29px"></div><div class="abs cb" style="left:320px;top:777px"></div><div class="abs td" style="left:355px;top:771px;height:28px">Приказ</div><div class="abs trow" style="left:309px;top:800px;width:997px;height:29px"></div><div class="abs vdiv" style="left:347px;top:800px;height:29px"></div><div class="abs vdiv" style="left:528px;top:800px;height:29px"></div><div class="abs cb" style="left:320px;top:806px"></div><div class="abs td" style="left:355px;top:800px;height:28px">Протокол</div><div class="abs" style="left:1306px;top:597px;width:8px;height:176px;background:#6e7e88"></div><div class="abs tfoot" style="left:309px;top:828px;width:1005px;height:30px"></div><div class="abs" style="left:320px;top:834.84px;font-size:12px;line-height:14px;color:#8896a3;white-space:nowrap">10 строк на странице</div>

</body></html>
